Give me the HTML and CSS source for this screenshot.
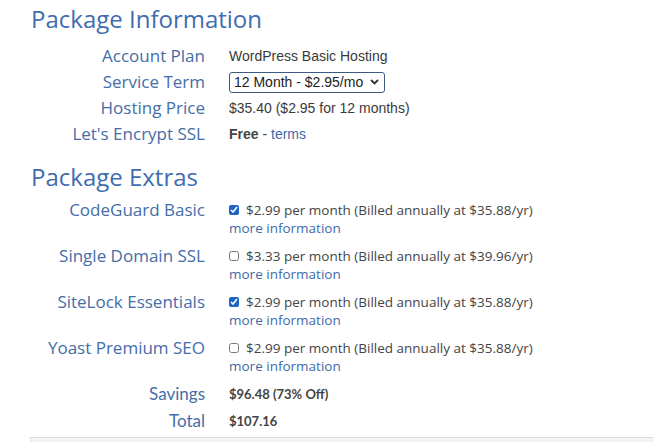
FILE: index.html
```html
<!DOCTYPE html>
<html>
<head>
<meta charset="utf-8">
<link rel="stylesheet" href="styles.css">
</head>
<body>
<div class="page">
  <h2 class="section-title first">Package Information</h2>
  <div class="info-grid">
    <div class="label">Account Plan</div>
    <div class="value arial">WordPress Basic Hosting</div>
    <div class="label">Service Term</div>
    <div class="value">
      <div class="select">
        <span>12 Month - $2.95/mo</span>
        <svg class="chev" width="9" height="6" viewBox="0 0 9 6"><path d="M1 1l3.5 3.5L8 1" fill="none" stroke="#333" stroke-width="1.8"/></svg>
      </div>
    </div>
    <div class="label">Hosting Price</div>
    <div class="value arial">$35.40 ($2.95 for 12 months)</div>
    <div class="label">Let's Encrypt SSL</div>
    <div class="value arial"><span><span class="bold">Free</span> - <a class="link">terms</a></span></div>
  </div>

  <h2 class="section-title second">Package Extras</h2>
  <div class="extras-grid">
    <div class="label">CodeGuard Basic</div>
    <div class="extra">
      <div class="line"><input type="checkbox" class="cb" checked><span>$2.99 per month (Billed annually at $35.88/yr)</span></div>
      <a class="link more">more information</a>
    </div>
    <div class="label">Single Domain SSL</div>
    <div class="extra">
      <div class="line"><input type="checkbox" class="cb"><span>$3.33 per month (Billed annually at $39.96/yr)</span></div>
      <a class="link more">more information</a>
    </div>
    <div class="label">SiteLock Essentials</div>
    <div class="extra">
      <div class="line"><input type="checkbox" class="cb" checked><span>$2.99 per month (Billed annually at $35.88/yr)</span></div>
      <a class="link more">more information</a>
    </div>
    <div class="label">Yoast Premium SEO</div>
    <div class="extra">
      <div class="line"><input type="checkbox" class="cb"><span>$2.99 per month (Billed annually at $35.88/yr)</span></div>
      <a class="link more">more information</a>
    </div>
  </div>
  <div class="totals-grid">
    <div class="label alt">Savings</div>
    <div class="value alt-val">$96.48 (73% Off)</div>
    <div class="label alt">Total</div>
    <div class="value alt-val">$107.16</div>
  </div>
  <div class="footer-box"></div>
</div>
</body>
</html>
```

FILE: styles.css
```css
html, body {
  margin: 0;
  padding: 0;
  background: #fff;
}
body {
  font-family: "Open Sans", sans-serif;
  color: #333;
  overflow: hidden;
}
.page {
  width: 654px;
  height: 442px;
  overflow: hidden;
}
.section-title {
  font-family: "Open Sans", sans-serif;
  font-weight: 400;
  font-size: 24px;
  line-height: 32px;
  color: #3f6db0;
  margin: 0 0 0 31px;
}
.section-title.first {
  padding-top: 3px;
  height: 40px;
}
.section-title.second {
  margin-top: 14px;
  height: 40px;
}
.info-grid,
.extras-grid,
.totals-grid {
  display: grid;
  grid-template-columns: 205px 1fr;
  column-gap: 24px;
}
.info-grid {
  grid-auto-rows: 26px;
}
.label {
  text-align: right;
  font-size: 17px;
  color: #456da8;
  line-height: 26px;
  white-space: nowrap;
}
.value {
  display: flex;
  align-items: center;
  font-size: 14px;
  color: #3a3a3a;
  white-space: nowrap;
}
.arial {
  font-family: "Liberation Sans", Arial, sans-serif;
}
.bold {
  font-weight: 700;
  color: #444;
}
.link {
  color: #3f6aa8;
  text-decoration: none;
}
.select {
  display: flex;
  align-items: center;
  justify-content: space-between;
  box-sizing: border-box;
  width: 156px;
  height: 21px;
  border: 1px solid #3d5a80;
  border-radius: 3px;
  padding: 0 5px 0 4px;
  font-family: "Liberation Sans", Arial, sans-serif;
  font-size: 14px;
  color: #222;
}
.chev {
  display: block;
}
.extras-grid {
  row-gap: 10px;
}
.extras-grid .label {
  line-height: 18px;
}
.extra {
  font-size: 13.5px;
  line-height: 18px;
  color: #444;
  white-space: nowrap;
}
.line {
  display: flex;
  align-items: center;
}
.cb {
  margin: 0 7px 0 0;
  width: 10px;
  height: 10px;
  accent-color: #1f63c6;
}
.more {
  display: block;
}
.totals-grid {
  margin-top: 5px;
  grid-auto-rows: 27px;
}
.label.alt {
  font-family: "Lato", sans-serif;
  font-size: 17px;
  line-height: 27px;
}
.alt-val {
  font-family: "Lato", sans-serif;
  font-weight: 700;
  font-size: 13px;
  color: #444;
}
.footer-box {
  margin: 3px 0 0 30px;
  height: 20px;
  background: #f4f4f4;
  border: 1px solid #ddd;
  border-right: none;
}
```
